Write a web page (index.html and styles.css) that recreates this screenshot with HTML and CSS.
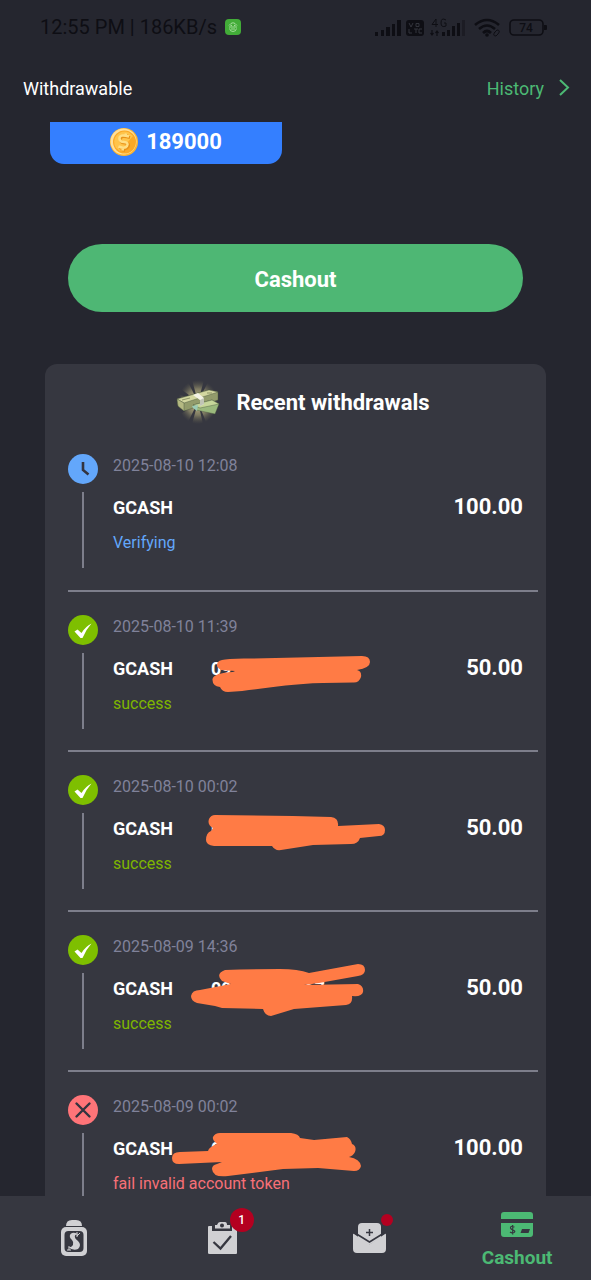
FILE: index.html
```html
<!DOCTYPE html>
<html lang="en">
<head>
<meta charset="utf-8">
<meta name="viewport" content="width=device-width, initial-scale=1">
<title>Withdrawable</title>
<link rel="stylesheet" href="styles.css">
</head>
<body>
<svg width="0" height="0" class="defs" aria-hidden="true">
  <symbol id="check" viewBox="0 0 30 30"><circle cx="15" cy="15" r="15" fill="#7ebf00"/><path d="M6.500 16.500 L9.500 14.500 L13.500 18 Q17.500 11.500 23.500 8.500 Q18 14.500 14.500 23 L12.500 23 Z" fill="#fff"/></symbol>
  <symbol id="clock" viewBox="0 0 30 30"><circle cx="15" cy="15" r="15" fill="#63a7fb"/><path d="M15 8 V16 L20.500 20.500" fill="none" stroke="#33343f" stroke-width="2.600"/></symbol>
  <symbol id="cross" viewBox="0 0 30 30"><circle cx="15" cy="15" r="15" fill="#ff7478"/><path d="M8.500 8.500 L21.500 21.500 M21.500 8.500 L8.500 21.500" stroke="#33343f" stroke-width="2.400" stroke-linecap="round"/></symbol>
</svg>
<div class="app">
  <div class="status">
    <span class="status-text">12:55 PM | 186KB/s</span>
    <svg class="status-app" viewBox="0 0 16 16"><rect width="16" height="16" rx="4" fill="#42ac38"/><path d="M4 6.500 Q8 1 12 6.500 M4 8 H12 M4.500 9.500 Q5 12.500 8 12.500 Q11 12.500 11.500 9.500 M6 10 H10" fill="none" stroke="#b8e6b0" stroke-width=".8"/><circle cx="6.200" cy="6.500" r=".7" fill="#b8e6b0"/><circle cx="9.800" cy="6.500" r=".7" fill="#b8e6b0"/></svg>
    <svg class="status-icons" viewBox="0 0 174 24" fill="#0e0e14">
      <path d="M0 17h3v4h-3z M6 15h3v6h-3z M11 12h4v9h-4z M17 9h3v12h-3z M22 5h4v16h-4z"/>
      <rect x="31" y="5" width="18" height="16" rx="3"/>
      <path d="M34 8l2 4 2-4 M41 8.500h3v3h-3z M34 14v4h3 M39 14h4 M41 14v4 M47 14h-3v4h3" fill="none" stroke="#33343c" stroke-width="1"/>
      <path d="M61 4 L57 9.500 H63 M61 4 V12 M71 5 Q66 2 66 8 Q66 13 71 11 V8 H69" fill="none" stroke="#0e0e14" stroke-width="1"/>
      <path d="M57 15v5 M55.500 18l1.500 2 1.500-2 M62 21v-5 M60.500 18l1.500-2 1.500 2" fill="none" stroke="#0e0e14" stroke-width="1.200"/>
      <path d="M67 17h3v4h-3z M72 15h3v6h-3z M77 11h3v10h-3z M82 8h3v13h-3z"/><path opacity=".4" d="M87 5h3v16h-3z"/>
      <path d="M100 10 Q112 0 124 10 M104 14 Q112 7 120 14 M108 18 Q112 14 116 18" fill="none" stroke="#0e0e14" stroke-width="2.600"/><circle cx="112" cy="20" r="1.800"/>
      <path d="M119 18l3-3q4 0 1 4l-2 2q-4 0-1-4" fill="none" stroke="#0e0e14"/>
      <rect x="135" y="5" width="33" height="15" rx="4" fill="none" stroke="#0e0e14" stroke-width="1.600"/><path d="M169 10h2q1 0 1 1v3q0 1-1 1h-2z"/>
      <text x="151" y="17" class="battery" text-anchor="middle">74</text>
    </svg>
  </div>
  <header class="header">
    <h1 class="title">Withdrawable</h1>
    <a class="history" href="#history">History
      <svg class="chevron" viewBox="0 0 12 18"><path d="M2 1 L10 8.500 L2 16" fill="none" stroke="#4cb974" stroke-width="2"/></svg>
    </a>
  </header>
  <main class="main">
    <div class="balance">
      <svg class="coin" viewBox="0 0 28 28"><circle cx="14" cy="14" r="14" fill="#ffb52e"/><circle cx="13.500" cy="13.500" r="13" fill="#ffe09a"/><circle cx="14.500" cy="14" r="11.500" fill="#fba927"/><path d="M6 20 A10.500 10.500 0 0 1 19 4.500 L23 8 L10 23Z" fill="#ffc44a"/><path d="M19 8.500 Q9 5.500 9.500 11 Q10 14 14 14 Q19 14.500 17 18 Q15 21 8.500 18.500 M16 5.500 L15.500 8 M13 19.500 L12.500 22.500" fill="none" stroke="#e8921a" stroke-width="3" transform="translate(1 1)"/><path d="M19 8.500 Q9 5.500 9.500 11 Q10 14 14 14 Q19 14.500 17 18 Q15 21 8.500 18.500 M16 5.500 L15.500 8 M13 19.500 L12.500 22.500" fill="none" stroke="#ffdf85" stroke-width="2.500"/></svg>
      <span>189000</span>
    </div>
    <button class="cashout" type="button">Cashout</button>
    <section class="card">
      <h2 class="card-title">
        <svg class="cash" viewBox="0 0 44 44">
          <defs><radialGradient id="glow"><stop offset="0" stop-color="#e0d997"/><stop offset=".6" stop-color="#9c9670" stop-opacity=".7"/><stop offset="1" stop-color="#64614f" stop-opacity="0"/></radialGradient></defs>
          <path d="M22 22 L16 0 H28Z M22 22 L32 2 L40 10Z M22 22 L42 15 V30Z M22 22 L38 34 L30 42Z M22 22 L27 44 H16Z M22 22 L12 42 L5 34Z M22 22 L2 29 V14Z M22 22 L5 9 L12 2Z" fill="url(#glow)"/>
          <g stroke="#45503a" stroke-width=".4">
            <path d="M1 19 L33 10 L42 12 L42 20 L8 31 L2 26Z" fill="#929b6b"/><path d="M1 19 L33 10 L42 12 L8 23Z" fill="#d3d7a0"/><path d="M1 19 L8 23 V31 L2 26Z" fill="#b4b982"/>
            <path d="M17 25 L36 20 L43 24 L39 34 L20 30Z" fill="#9bb97d"/><path d="M17 25 L36 20 L43 24 L24 28Z" fill="#c6d69a"/>
          </g>
          <path d="M17 15 L22 13 L28 18 V24 L24 26 V20Z" fill="#f3f2e5"/><path d="M24 20 L28 18 V24 L24 26Z" fill="#c0c4b5"/><path d="M16 26 L22 25 L21 31 L17 28Z" fill="#9bcbb5"/>
          <path d="M6 20 L14 18 M31 13 L36 13" stroke="#8c9365"/>
        </svg>
        <span>Recent withdrawals</span>
      </h2>
      <ul class="list">
        <li class="row">
          <div class="rail"><svg class="state"><use href="#clock"/></svg><span class="line"></span></div>
          <div class="info"><time class="date">2025-08-10 12:08</time><div class="method"><span>GCASH</span></div><div class="result verifying">Verifying</div></div>
          <strong class="amount">100.00</strong>
        </li>
        <li class="row">
          <div class="rail"><svg class="state"><use href="#check"/></svg><span class="line"></span></div>
          <div class="info"><time class="date">2025-08-10 11:39</time><div class="method"><span>GCASH</span><span class="account"><span>09</span></span></div><div class="result success">success</div></div>
          <strong class="amount">50.00</strong>
          <svg class="scribble" viewBox="0 0 240 60"><path d="M54 14 Q60 12 85 12.500 L194 10 Q202 10 202 16 Q202 22 189 24 Q194 25 193 31 Q191 37 185 36.500 L155 37 C115 38 90 44 60 46 Q54 46 52 41 Q44 40 44.500 33 Q46 27 65 26 L67 25 L53 24 Q46 20 51 15Z" fill="#ff7b45"/></svg>
        </li>
        <li class="row">
          <div class="rail"><svg class="state"><use href="#check"/></svg><span class="line"></span></div>
          <div class="info"><time class="date">2025-08-10 00:02</time><div class="method"><span>GCASH</span><span class="account"><span>0</span></span></div><div class="result success">success</div></div>
          <strong class="amount">50.00</strong>
          <svg class="scribble" viewBox="0 0 240 60"><path d="M47 9 L125 10 L163 11 Q171 12 170 20 L211 18 Q217 19 217 24 Q217 30 211 30 L192 32 Q190 38 183 38 L145 39 L113 44 Q107 45 104 40 L46 40 Q38 39 38 34 Q38 27 43 25 L45 22 Q39 19 41 13 Q43 9 47 9Z" fill="#ff7b45"/></svg>
        </li>
        <li class="row">
          <div class="rail"><svg class="state"><use href="#check"/></svg><span class="line"></span></div>
          <div class="info"><time class="date">2025-08-09 14:36</time><div class="method"><span>GCASH</span><span class="account"><span>09</span><span>67</span></span></div><div class="result success">success</div></div>
          <strong class="amount">50.00</strong>
          <svg class="scribble" viewBox="0 0 240 60"><path d="M57 4 Q80 3 112 3 Q130 3 141 7 L190 -2 Q197 -2 197 4 Q197 9 190 10 L151 17 L136 19 L190 18 Q196 20 195 26 Q194 31 184 30 Q185 38 178 39 L126 43 L103 50 Q97 50 95 43 L54 42 L47 40 L29 37 Q23 35 23 30 Q24 24 32 24 L63 18 L54 15 Q47 8 57 4Z" fill="#ff7b45"/></svg>
        </li>
        <li class="row">
          <div class="rail"><svg class="state"><use href="#cross"/></svg><span class="line"></span></div>
          <div class="info"><time class="date">2025-08-09 00:02</time><div class="method"><span>GCASH</span><span class="account"><span>0</span></span></div><div class="result failed">fail invalid account token</div></div>
          <strong class="amount">100.00</strong>
          <svg class="scribble" viewBox="0 0 240 60"><path d="M52 7 L123 7 Q131 8 132 12 L146 14 L179 11 Q183 13 184 18 Q189 20 187 26 Q185 30 181 31 Q192 33 193 40 Q192 45 186 45 L150 42 L115 43 L60 50 Q45 52 44 43 Q44 39 49 38 L54 36 L11 38 Q4 38 4 32 Q4 26 12 26 L40 25 Q41 21 49 18 Q44 14 45 11 Q47 7 52 7Z" fill="#ff7b45"/></svg>
        </li>
      </ul>
    </section>
  </main>
  <nav class="nav" aria-label="Main">
    <a class="tab" href="#earn" aria-label="Earn"><svg class="tab-icon" viewBox="0 0 36 36"><path d="M10 6 Q10 0 16 0 H20 Q26 0 26 6Z" fill="#d0d0d3"/><rect x="5" y="7" width="26" height="29" rx="5" fill="#d0d0d3"/><rect x="8.500" y="11" width="19" height="21" rx="4" fill="#363740"/><path d="M23 15 Q18 11 14.500 14 Q12.500 17 16 20 Q18 22 17 25 Q15 28 12 27 Q17 31 22 29 Q26 25 22 21 Q18 18 19 15.500 Q20 14 23 15Z" fill="#d0d0d3"/><path d="M21 12v5 M24 13l-3 3 M13 26v4 M11 30h4" stroke="#d0d0d3"/></svg></a>
    <a class="tab" href="#tasks" aria-label="Tasks"><svg class="tab-icon" viewBox="0 0 36 36"><path d="M5 6 H8 V11 H28 V6 H31.500 Q33 6 33 8 V33 Q33 34 32 34 H5.500 Q4 34 4 33 V7 Q4 6 5 6Z" fill="#d0d0d3"/><path fill-rule="evenodd" d="M11 8.500 V5 H13 Q14 2 16 2 H21 Q23 2 23 5 H26 V8.500Z M18 3.500 A2 2 0 1 0 18 7.500 A2 2 0 0 0 18 3.500Z" fill="#d0d0d3"/><path d="M9.500 22 L16.500 28.500 L27 16" fill="none" stroke="#363740" stroke-width="2.300"/></svg><span class="badge">1</span></a>
    <a class="tab" href="#inbox" aria-label="Inbox"><svg class="tab-icon" viewBox="0 0 36 36"><path d="M7 18 V7 Q7 3 11 3 H26 Q30 3 30 7 V18 L18 25Z" fill="#d0d0d3"/><path d="M3 14 L18.500 24.500 L34 14 Q35 13 35 15 V29 Q35 33 31 33 H6 Q2 33 2 29 V15 Q2 13 3 14Z" fill="#d0d0d3"/><path d="M4 13 L18.500 22 L33 13" fill="none" stroke="#363740" stroke-width="1.600"/><path d="M18.500 9 V16 M15 12.500 H22" stroke="#363740" stroke-width="1.500"/></svg><span class="dot"></span></a>
    <a class="tab active" href="#cashout" aria-current="page"><svg class="card-icon" viewBox="0 0 34 26"><path d="M4 0 H30 Q33 0 33 3 V7 H1 V3 Q1 0 4 0Z M1 11 H33 V22 Q33 25 30 25 H4 Q1 25 1 22Z" fill="#4cb974"/><path d="M14.500 15 Q10 13.500 10.500 16 Q11 17.500 13 18 Q16 19 14 20.500 Q12 21.500 10 20 M12.700 13 V22.500" fill="none" stroke="#363740" stroke-width="1.200"/><path d="M22 17 H30 L28.500 21 H20.500Z" fill="#363740"/></svg><span>Cashout</span></a>
  </nav>
</div>
</body>
</html>
```

FILE: styles.css
```css
* { box-sizing: border-box; }
body { margin: 0; background: #25262f; color: #fff; font-family: Roboto, "Noto Sans", sans-serif; font-size: 18px; }
h1, h2, ul { margin: 0; padding: 0; font-weight: 400; }
a { text-decoration: none; }
svg { display: block; flex: none; overflow: visible; }
.defs { position: absolute; }
.app { display: flex; flex-direction: column; height: 100vh; }
.status { flex: none; display: flex; align-items: center; height: 54px; padding: 0 42px 0 40px; color: #0e0e14; font-size: 20px; }
.status-text { margin-right: 8px; }
.status-app { width: 16px; height: 16px; }
.status-icons { width: 174px; height: 24px; margin-left: auto; }
.battery { font-size: 12px; font-weight: 500; }
.header { flex: none; display: flex; align-items: center; justify-content: space-between; height: 68px; padding: 0 21px 0 23px; }
.title { font-size: 18px; }
.history { display: flex; align-items: center; gap: 14px; color: #4cb974; }
.chevron { width: 12px; height: 18px; }
.main { flex: 1; min-height: 0; overflow: hidden; padding: 0 45px; }
.balance { display: flex; align-items: center; justify-content: center; gap: 8px; width: 232px; height: 42px; margin-left: 5px; padding-bottom: 3px; border-radius: 0 0 14px 14px; background: #347fff; font-size: 22px; font-weight: 700; }
.coin { width: 28px; height: 28px; }
.cashout { display: block; width: calc(100% - 46px); height: 68px; margin: 80px 23px 52px; padding: 2px 0 0; border: 0; border-radius: 34px; background: #4eb774; color: #fff; font: 700 22px Roboto, sans-serif; }
.card { padding: 15px 8px 0 23px; border-radius: 12px; background: #363740; }
.card-title { display: flex; align-items: center; justify-content: center; gap: 16px; height: 46px; font-size: 22px; font-weight: 700; }
.cash { width: 44px; height: 44px; }
.list { list-style: none; }
.row { position: relative; display: flex; height: 160px; padding: 23px 15px 0 0; border-bottom: 2px solid #7d7e8b; }
.row:first-child { height: 167px; padding-top: 29px; }
.rail { display: flex; flex-direction: column; align-items: center; gap: 8px; width: 30px; margin-right: 15px; }
.state { width: 30px; height: 30px; }
.line { width: 2px; height: 76px; background: #7d7e8b; }
.info { flex: 1; }
.date { display: block; height: 24px; color: #80829a; font-size: 16px; line-height: 24px; }
.method { display: flex; height: 40px; margin-top: 10px; font-weight: 700; line-height: 40px; }
.account { display: flex; justify-content: space-between; width: 114px; margin-left: 38px; }
.result { font-size: 16px; line-height: 30px; }
.verifying { color: #63a7fb; }
.success { color: #7eb500; }
.failed { color: #f87077; }
.amount { font-size: 22px; line-height: 28px; padding-top: 39px; }
.scribble { position: absolute; left: 100px; top: 54px; width: 240px; height: 60px; }
.nav { flex: none; display: grid; grid-template-columns: repeat(4, 1fr); height: 84px; background: #363740; }
.tab { position: relative; display: flex; flex-direction: column; align-items: center; justify-content: center; }
.tab-icon { width: 36px; height: 36px; }
.active { gap: 8px; padding-top: 5px; color: #4cb974; font-size: 19px; font-weight: 700; }
.card-icon { width: 34px; height: 26px; }
.badge { position: absolute; left: calc(50% + 8px); top: 12px; width: 24px; height: 24px; border-radius: 50%; background: #b40020; color: #fff; font-size: 12px; font-weight: 500; line-height: 24px; text-align: center; }
.dot { position: absolute; left: calc(50% + 12px); top: 18px; width: 12px; height: 12px; border-radius: 50%; background: #b40020; }
```
